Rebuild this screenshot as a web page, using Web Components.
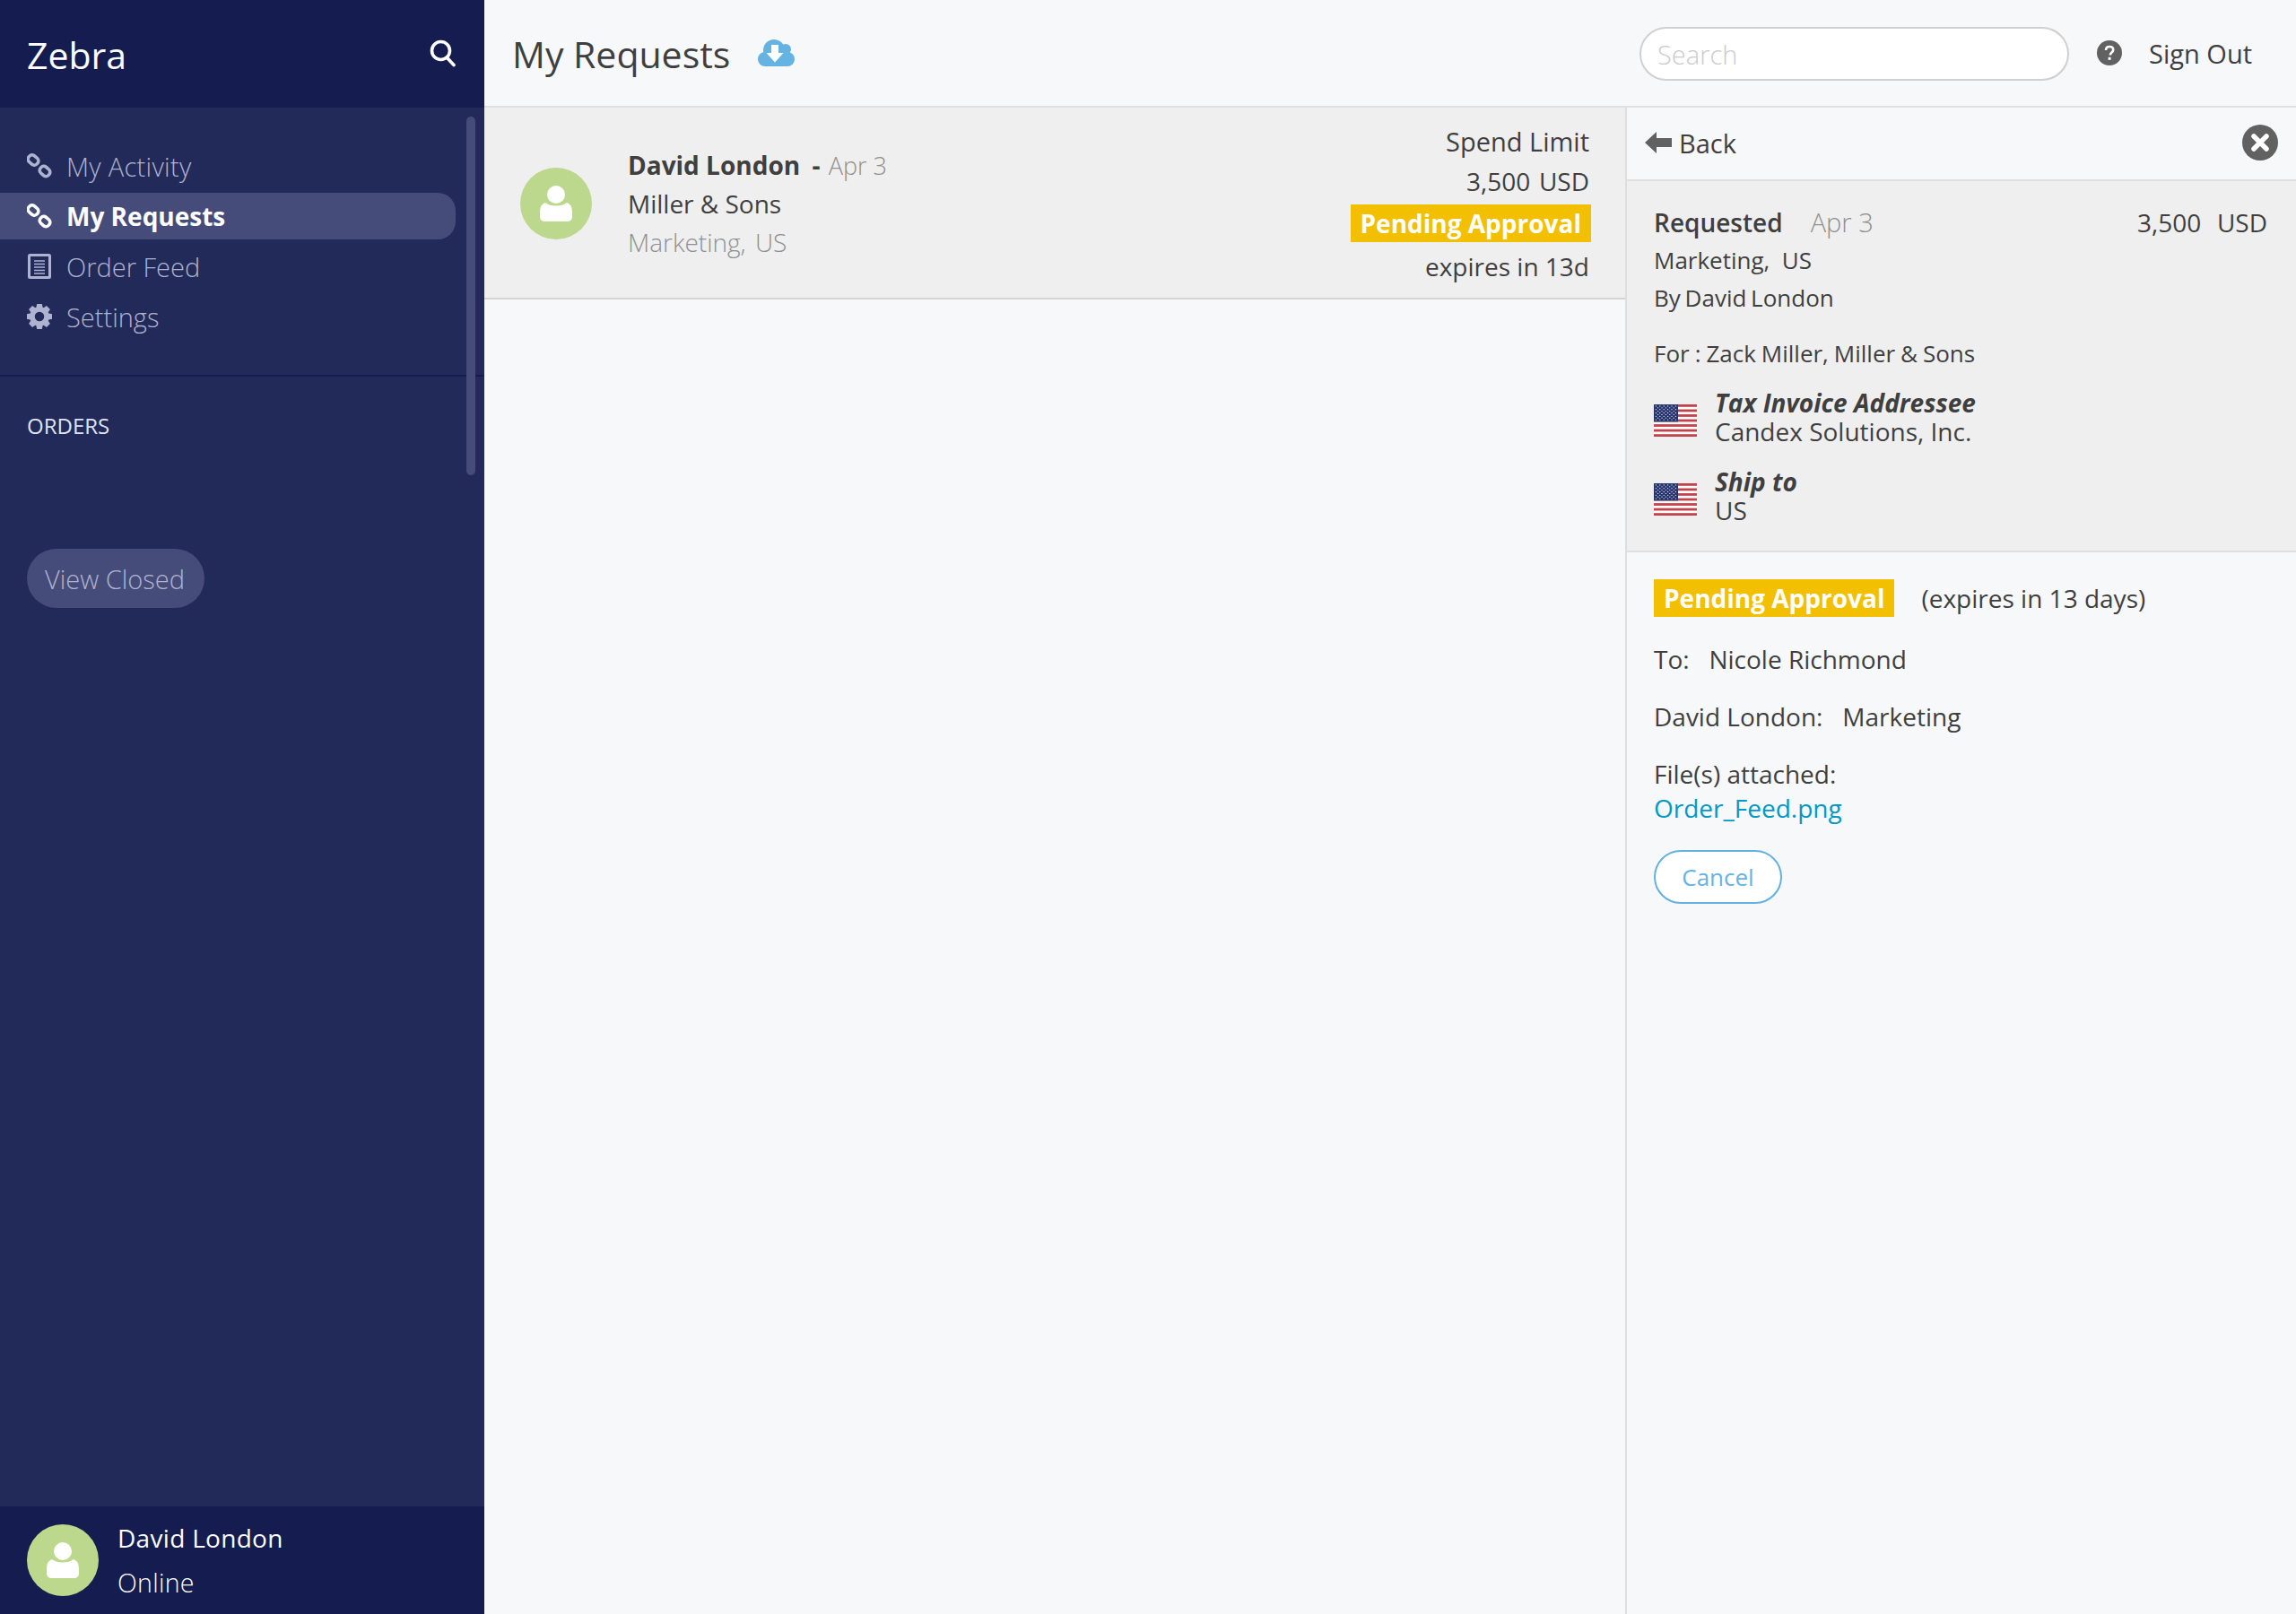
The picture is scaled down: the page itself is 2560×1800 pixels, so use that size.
<!DOCTYPE html>
<html>
<head>
<meta charset="utf-8">
<title>Zebra</title>
<style>
  html, body { margin: 0; height: 100%; }
  body { font-family: "Open Sans", "Liberation Sans", sans-serif; color: #3f3f3f; background: #f7f8fa; }
</style>
</head>
<body>
<zb-app></zb-app>
<script>
const linkIcon = `<svg viewBox="0 0 28 28" width="28" height="28" fill="none" stroke="currentColor" stroke-width="3.600">
  <rect x="1" y="3" width="12" height="9" rx="4" transform="rotate(42 7 7.500)"/>
  <rect x="14" y="15.500" width="12" height="9" rx="4" transform="rotate(42 20 20)"/></svg>`;

const feedIcon = `<svg viewBox="0 0 26 28" width="26" height="28" fill="none" stroke="currentColor">
  <rect x="1.500" y="1.500" width="23" height="25" rx="1" stroke-width="3"/>
  <path d="M7 8h12M7 11.500h12M7 15h12M7 18.500h12M7 22h12" stroke-width="1.600"/></svg>`;

const gearTeeth = [0, 45, 90, 135, 180, 225, 270, 315]
  .map(a => `<path d="M11.200 0h5.600l1.200 5.500h-8z" transform="rotate(${a} 14 14)"/>`).join('');
const gearIcon = `<svg viewBox="0 0 28 28" width="28" height="28" fill="currentColor">${gearTeeth}
  <circle cx="14" cy="14" r="8" fill="none" stroke="currentColor" stroke-width="5.500"/></svg>`;

const icons = { link: linkIcon, feed: feedIcon, gear: gearIcon };

class ZbAvatar extends HTMLElement {
  constructor() {
    super();
    this.attachShadow({ mode: 'open' }).innerHTML = `
      <style>
        :host { display: block; width: 80px; height: 80px; flex: none; }
        svg { display: block; }
      </style>
      <svg viewBox="0 0 80 80" width="80" height="80">
        <circle cx="40" cy="40" r="40" fill="#bbd88d"/>
        <circle cx="40" cy="30" r="10" fill="#fff"/>
        <path d="M22 54c0-8 0-12.500 6-15 3 2.500 7.500 3.500 12 3.500s9-1 12-3.500c6 2.500 6 7 6 15 0 4-2 6-6 6H28c-4 0-6-2-6-6z" fill="#fff"/>
      </svg>`;
  }
}

class ZbNavItem extends HTMLElement {
  constructor() {
    super();
    const icon = icons[this.getAttribute('icon')];
    this.attachShadow({ mode: 'open' }).innerHTML = `
      <style>
        :host {
          display: flex; align-items: center; gap: 16px;
          height: 52px; margin-bottom: 4px; padding-left: 30px;
          width: 508px; box-sizing: border-box;
          border-radius: 0 20px 20px 0;
          color: #aeb3cf; font-size: 29px; font-weight: 300;
        }
        :host([active]) { background: #454c79; color: #fff; font-size: 28px; font-weight: 700; }
        svg { display: block; }
        .ico { width: 28px; display: flex; justify-content: center; flex: none; }
      </style>
      <span class="ico">${icon}</span><slot></slot>`;
  }
}

class ZbSidebar extends HTMLElement {
  constructor() {
    super();
    this.attachShadow({ mode: 'open' }).innerHTML = `
      <style>
        :host {
          display: flex; flex-direction: column; position: relative;
          width: 540px; height: 1800px; flex: none;
          background: #222a5a; color: #fff;
        }
        .head {
          height: 120px; flex: none; box-sizing: border-box; padding: 2px 30px 0;
          display: flex; align-items: center; justify-content: space-between;
          background: #141c50; font-size: 41px;
        }
        .head svg { display: block; margin: -4px 2px 0 0; }
        nav { flex: none; height: 300px; box-sizing: border-box; padding-top: 39px; border-bottom: 2px solid #141c50; }
        .orders { padding: 39px 30px 0; flex: 1; }
        h2 { margin: 0; font-size: 24px; line-height: 32px; font-weight: 400; color: #dfe3ef; }
        button {
          display: block; margin-top: 121px; width: 198px; height: 66px; padding: 0 2px 0 0;
          border: 0; border-radius: 33px; background: #454c79; color: #aeb3cf;
          font: 300 29px "Open Sans", sans-serif;
        }
        .thumb { position: absolute; left: 520px; top: 130px; width: 10px; height: 400px; border-radius: 5px; background: #454c79; }
        footer {
          height: 120px; flex: none; box-sizing: border-box; padding: 0 30px;
          display: flex; align-items: center; gap: 21px; background: #141c50;
        }
        .who { font-size: 28px; line-height: 50px; letter-spacing: .3px; }
        .who div:last-child { font-weight: 300; font-size: 28.500px; }
      </style>
      <div class="head"><span>Zebra</span>
        <svg viewBox="0 0 29 31" width="29" height="31" fill="none" stroke="#fff" stroke-width="3.600" stroke-linecap="round">
          <circle cx="12.500" cy="12.500" r="10"/><path d="M20 21l7 7.500"/></svg>
      </div>
      <nav>
        <zb-nav-item icon="link" style="letter-spacing:.3px">My Activity</zb-nav-item>
        <zb-nav-item icon="link" active>My Requests</zb-nav-item>
        <zb-nav-item icon="feed">Order Feed</zb-nav-item>
        <zb-nav-item icon="gear">Settings</zb-nav-item>
      </nav>
      <div class="orders">
        <h2>ORDERS</h2>
        <button>View Closed</button>
      </div>
      <div class="thumb"></div>
      <footer>
        <zb-avatar></zb-avatar>
        <div class="who"><div>David London</div><div>Online</div></div>
      </footer>`;
  }
}

class ZbTopbar extends HTMLElement {
  constructor() {
    super();
    this.attachShadow({ mode: 'open' }).innerHTML = `
      <style>
        :host {
          display: flex; align-items: center; flex: none; height: 120px; box-sizing: border-box;
          border-bottom: 2px solid #e0e0e0; padding: 0 49px 0 31px; color: #3f3f3f;
        }
        h1 { margin: 2px 0 0; font-size: 41px; font-weight: 400; }
        .cloud { margin: 0 auto 0 31px; display: block; }
        .search {
          width: 479px; height: 60px; box-sizing: border-box; padding: 0 18px; margin-top: 2px;
          border: 2px solid #d0d0d0; border-radius: 30px; background: #fff;
          display: flex; align-items: center; color: #cbcbcb; font-size: 29px; font-weight: 300;
        }
        .help { display: block; margin: 0 30px 0 31px; }
        .out { font-size: 29px; }
      </style>
      <h1>My Requests</h1>
      <svg class="cloud" viewBox="0 0 41 30" width="41" height="30">
        <g fill="#65b3e3">
          <circle cx="18" cy="12" r="12"/><circle cx="31" cy="11" r="6"/>
          <circle cx="8" cy="22" r="8"/><circle cx="33" cy="22" r="8"/>
          <rect x="8" y="14" width="25" height="16"/>
        </g>
        <path fill="#fff" d="M15 6h8v9h5.500L19 25.500 9.500 15H15z"/>
      </svg>
      <div class="search">Search</div>
      <svg class="help" viewBox="0 0 28 28" width="28" height="28">
        <circle cx="14" cy="14" r="14" fill="#616161"/>
        <path d="M10 11c0-2.500 1.800-4 4.200-4 2.300 0 4 1.400 4 3.500 0 3-3.200 3-3.200 5.500v.5" fill="none" stroke="#fff" stroke-width="2.600"/>
        <rect x="12.600" y="18.800" width="3" height="3" fill="#fff"/>
      </svg>
      <span class="out">Sign Out</span>`;
  }
}

class ZbBadge extends HTMLElement {
  constructor() {
    super();
    this.attachShadow({ mode: 'open' }).innerHTML = `
      <style>
        :host {
          display: inline-block; height: 42px; line-height: 42px; padding: 0 11px;
          background: #f2c000; color: #fff; font-size: 28px; font-weight: 700;
        }
      </style><slot></slot>`;
  }
}

class ZbRequestRow extends HTMLElement {
  constructor() {
    super();
    this.attachShadow({ mode: 'open' }).innerHTML = `
      <style>
        :host {
          display: flex; align-items: center; flex: none; height: 214px; box-sizing: border-box;
          border-bottom: 2px solid #d4d4d4; background: #efefef; padding: 0 40px 0 40px;
          font-size: 28px; color: #3f3f3f;
        }
        zb-avatar { margin-top: 2px; }
        .text { margin-left: 40px; flex: 1; line-height: 43px; padding-top: 2px; }
        .name { font-weight: 700; }
        .dash { font-weight: 700; margin: 0 2px 0 6px; }
        .dim { color: #8f8f8f; font-weight: 300; }
        .loc { word-spacing: 3px; }
        .date { font-size: 27px; }
        .right { text-align: right; line-height: 44px; padding-top: 4px; }
        .limit { font-size: 29px; margin-top: -2px; }
        .amount { word-spacing: -2.500px; }
        .right zb-badge { display: block; width: max-content; margin: 4px -2px 5px auto; }
      </style>
      <zb-avatar></zb-avatar>
      <div class="text">
        <div><span class="name">David London</span><span class="dash"> -</span> <span class="dim date">Apr 3</span></div>
        <div>Miller &amp; Sons</div>
        <div class="dim loc">Marketing, US</div>
      </div>
      <div class="right">
        <div class="limit">Spend Limit</div>
        <div class="amount">3,500&nbsp; USD</div>
        <zb-badge>Pending Approval</zb-badge>
        <div>expires in 13d</div>
      </div>`;
  }
}

class ZbFlag extends HTMLElement {
  constructor() {
    super();
    const reds = [0, 2, 4, 6, 8, 10, 12]
      .map(i => `<rect x="0" y="${(i * 36 / 13).toFixed(2)}" width="48" height="${(36 / 13).toFixed(2)}" fill="#c2414b"/>`).join('');
    let stars = '';
    for (let r = 0; r < 9; r++) {
      for (let c = 0; c < (r % 2 ? 5 : 6); c++) {
        stars += `<circle cx="${(2.400 + c * 4.400 + (r % 2 ? 2.200 : 0)).toFixed(1)}" cy="${(1.900 + r * 1.900).toFixed(1)}" r=".65" fill="#e8ebf4"/>`;
      }
    }
    this.attachShadow({ mode: 'open' }).innerHTML = `
      <style>
        :host { display: block; width: 48px; height: 36px; flex: none; }
        svg { display: block; }
      </style>
      <svg viewBox="0 0 48 36" width="48" height="36"><rect width="48" height="36" fill="#fff"/>${reds}
        <rect width="27" height="19.400" fill="#27366e"/>${stars}</svg>`;
  }
}

class ZbAddress extends HTMLElement {
  constructor() {
    super();
    this.attachShadow({ mode: 'open' }).innerHTML = `
      <style>
        :host { display: flex; align-items: center; gap: 20px; line-height: 32px; font-size: 28px; }
        zb-flag { margin-top: 8px; }
        b { display: block; font-style: italic; font-weight: 700; }
      </style>
      <zb-flag></zb-flag>
      <div><b>${this.getAttribute('label')}</b><slot></slot></div>`;
  }
}

class ZbDetail extends HTMLElement {
  constructor() {
    super();
    this.attachShadow({ mode: 'open' }).innerHTML = `
      <style>
        :host {
          display: flex; flex-direction: column; width: 748px; flex: none;
          box-sizing: border-box; border-left: 2px solid #dedede;
          font-size: 28px; color: #3f3f3f;
        }
        .bar {
          flex: none; height: 82px; box-sizing: border-box; border-bottom: 2px solid #e0e0e0;
          display: flex; align-items: center; padding: 0 20px 2px 20px; font-size: 29px;
        }
        .bar .arrow { display: block; margin: -1px 8px 0 0; }
        .bar .close { display: block; margin-left: auto; }
        .info {
          flex: none; height: 414px; box-sizing: border-box; border-bottom: 2px solid #e0e0e0;
          background: #efefef; padding: 25px 19px 0 30px;
        }
        .line { line-height: 42px; font-size: 26px; }
        .first { display: flex; justify-content: space-between; font-size: 28px; padding-right: 13px; }
        .first b { font-weight: 600; }
        .first span span { color: #8f8f8f; font-weight: 300; margin-left: 31px; font-size: 29px; }
        .amount { word-spacing: 1.500px; }
        .by { word-spacing: -2px; }
        .for { margin: 20px 0 18px; word-spacing: -.800px; }
        zb-address + zb-address { margin-top: 24px; }
        .status { padding: 30px 19px 0 30px; }
        .top { display: flex; align-items: center; gap: 30px; }
        p { margin: 0; line-height: 40px; }
        .to { margin-top: 27px; }
        .next { margin-top: 24px; }
        a { display: block; color: #0099c6; text-decoration: none; line-height: 36px; }
        .cancel {
          display: block; margin-top: 29px; width: 143px; height: 60px; padding: 0;
          box-sizing: border-box; border: 2px solid #64b0e0; border-radius: 30px;
          background: #fff; color: #64b3e3; font: 400 26px "Open Sans", sans-serif;
        }
      </style>
      <div class="bar">
        <svg class="arrow" viewBox="0 0 30 24" width="30" height="24"><path fill="#616161" d="M0 12L13 0v7h17v10H13v7z"/></svg>
        <span>Back</span>
        <svg class="close" viewBox="0 0 40 40" width="40" height="40">
          <circle cx="20" cy="20" r="20" fill="#616161"/>
          <path d="M13 13l14 14M27 13L13 27" stroke="#fff" stroke-width="5.500" stroke-linecap="round"/>
        </svg>
      </div>
      <div class="info">
        <div class="line first"><span><b>Requested</b><span>Apr 3</span></span><span class="amount">3,500&nbsp; USD</span></div>
        <div class="line">Marketing,&nbsp; US</div>
        <div class="line by">By David London</div>
        <div class="line for">For : Zack Miller, Miller &amp; Sons</div>
        <zb-address label="Tax Invoice Addressee">Candex Solutions, Inc.</zb-address>
        <zb-address label="Ship to">US</zb-address>
      </div>
      <div class="status">
        <div class="top"><zb-badge>Pending Approval</zb-badge><span>(expires in 13 days)</span></div>
        <p class="to">To: &nbsp; Nicole Richmond</p>
        <p class="next">David London: &nbsp; Marketing</p>
        <p class="next">File(s) attached:</p>
        <a>Order_Feed.png</a>
        <button class="cancel">Cancel</button>
      </div>`;
  }
}

class ZbApp extends HTMLElement {
  constructor() {
    super();
    this.attachShadow({ mode: 'open' }).innerHTML = `
      <style>
        :host { display: flex; width: 2560px; height: 1800px; overflow: hidden; background: #f7f8fa; }
        .main { flex: 1; min-width: 0; display: flex; flex-direction: column; }
        .split { flex: 1; display: flex; min-height: 0; }
        .list { flex: 1; min-width: 0; display: flex; flex-direction: column; }
      </style>
      <zb-sidebar></zb-sidebar>
      <div class="main">
        <zb-topbar></zb-topbar>
        <div class="split">
          <div class="list"><zb-request-row></zb-request-row></div>
          <zb-detail></zb-detail>
        </div>
      </div>`;
  }
}

customElements.define('zb-avatar', ZbAvatar);
customElements.define('zb-nav-item', ZbNavItem);
customElements.define('zb-sidebar', ZbSidebar);
customElements.define('zb-topbar', ZbTopbar);
customElements.define('zb-badge', ZbBadge);
customElements.define('zb-request-row', ZbRequestRow);
customElements.define('zb-flag', ZbFlag);
customElements.define('zb-address', ZbAddress);
customElements.define('zb-detail', ZbDetail);
customElements.define('zb-app', ZbApp);
</script>
</body>
</html>
